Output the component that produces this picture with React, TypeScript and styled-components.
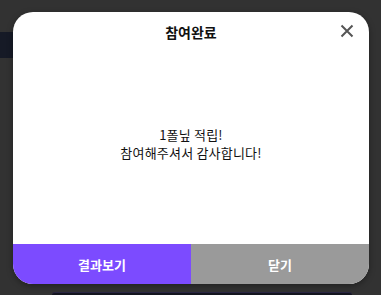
import styled, { createGlobalStyle } from "styled-components";

const GlobalStyle = createGlobalStyle`
  html, body {
    margin: 0;
    padding: 0;
    background: #323232;
    font-family: "Noto Sans CJK KR", "Noto Sans", sans-serif;
  }
`;

const Page = styled.div`
  position: relative;
  width: 381px;
  height: 295px;
  overflow: hidden;
`;

const Backdrop = styled.div`
  display: flex;
  flex-direction: column;
  height: 100%;
`;

const SideThumb = styled.div`
  margin-top: 32px;
  width: 13px;
  height: 26px;
  background: #161a26;
`;

const BottomCard = styled.div`
  margin: auto 29px 0 52px;
  height: 2px;
  border-top: 1px solid #2b2744;
  border-radius: 4px 4px 0 0;
  background: #14151f;
`;

const Overlay = styled.div`
  position: absolute;
  inset: 0;
  display: flex;
  align-items: flex-start;
  padding: 12px 12px 0 13px;
`;

const Modal = styled.div`
  width: 356px;
  height: 272px;
  background: #fff;
  border-radius: 20px;
  overflow: hidden;
  display: flex;
  flex-direction: column;
  box-shadow: 0 2px 6px rgba(0, 0, 0, 0.35);
`;

const Header = styled.div`
  position: relative;
  height: 40px;
  display: flex;
  align-items: center;
  justify-content: center;
`;

const Title = styled.h2`
  margin: 0;
  font-size: 14px;
  font-weight: 700;
  color: #111;
`;

const CloseButton = styled.button`
  position: absolute;
  top: 11px;
  right: 14px;
  width: 16px;
  height: 16px;
  padding: 0;
  border: 0;
  background: none;
  display: flex;
  align-items: center;
  justify-content: center;
`;

const Body = styled.div`
  flex: 1;
  display: flex;
  align-items: center;
  justify-content: center;
  padding-bottom: 8px;
`;

const Message = styled.p`
  margin: 0;
  font-size: 13px;
  line-height: 18px;
  letter-spacing: 0.2px;
  color: #111;
  text-align: center;
`;

const Footer = styled.div`
  display: flex;
  height: 40px;
`;

const FooterButton = styled.button<{ $tone: "primary" | "muted" }>`
  flex: 1;
  border: 0;
  font-family: inherit;
  font-size: 13px;
  font-weight: 700;
  color: #fff;
  background: ${p => (p.$tone === "primary" ? "#7c4bff" : "#9a9a9a")};
`;

function App() {
  return (
    <Page>
      <GlobalStyle />
      <Backdrop>
        <SideThumb />
        <BottomCard />
      </Backdrop>
      <Overlay>
        <Modal>
          <Header>
            <Title>참여완료</Title>
            <CloseButton aria-label="닫기">
              <svg width="14" height="14" viewBox="0 0 14 14">
                <path d="M1.5 1.5L12.5 12.5M12.5 1.5L1.5 12.5" stroke="#555" strokeWidth="2" />
              </svg>
            </CloseButton>
          </Header>
          <Body>
            <Message>
              1폴닢 적립!
              <br />
              참여해주셔서 감사합니다!
            </Message>
          </Body>
          <Footer>
            <FooterButton $tone="primary">결과보기</FooterButton>
            <FooterButton $tone="muted">닫기</FooterButton>
          </Footer>
        </Modal>
      </Overlay>
    </Page>
  );
}

export default App;
